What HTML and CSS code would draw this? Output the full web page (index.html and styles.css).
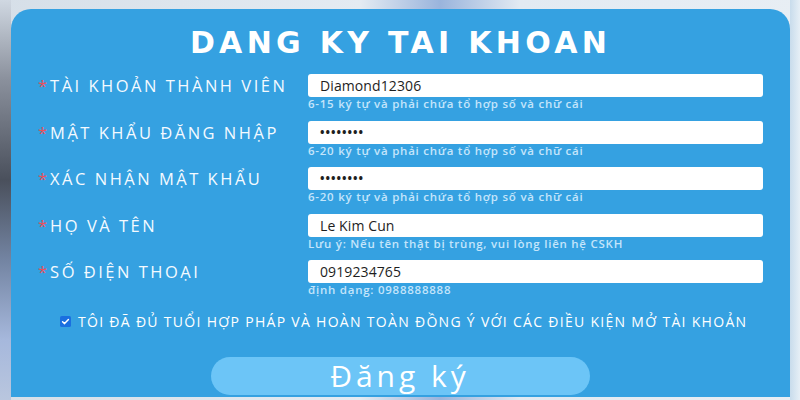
FILE: index.html
```html
<!DOCTYPE html>
<html lang="vi">
<head>
<meta charset="utf-8">
<title>Đăng ký tài khoản</title>
<link rel="stylesheet" href="styles.css">
</head>
<body>
<div class="frame">
  <div class="edge-left"></div>
  <main class="card">
    <h1 class="title">DANG KY TAI KHOAN</h1>
    <form class="form">
      <div class="row">
        <label class="label"><span class="req">*</span>TÀI KHOẢN THÀNH VIÊN</label>
        <div class="field">
          <div class="input">Diamond12306</div>
          <div class="hint">6-15 ký tự và phải chứa tổ hợp số và chữ cái</div>
        </div>
      </div>
      <div class="row">
        <label class="label"><span class="req">*</span>MẬT KHẨU ĐĂNG NHẬP</label>
        <div class="field">
          <div class="input pw">••••••••</div>
          <div class="hint">6-20 ký tự và phải chứa tổ hợp số và chữ cái</div>
        </div>
      </div>
      <div class="row">
        <label class="label"><span class="req">*</span>XÁC NHẬN MẬT KHẨU</label>
        <div class="field">
          <div class="input pw">••••••••</div>
          <div class="hint">6-20 ký tự và phải chứa tổ hợp số và chữ cái</div>
        </div>
      </div>
      <div class="row">
        <label class="label"><span class="req">*</span>HỌ VÀ TÊN</label>
        <div class="field">
          <div class="input">Le Kim Cun</div>
          <div class="hint">Lưu ý: Nếu tên thật bị trùng, vui lòng liên hệ CSKH</div>
        </div>
      </div>
      <div class="row">
        <label class="label"><span class="req">*</span>SỐ ĐIỆN THOẠI</label>
        <div class="field">
          <div class="input">0919234765</div>
          <div class="hint">định dạng: 0988888888</div>
        </div>
      </div>
      <div class="agree">
        <span class="check"><svg viewBox="0 0 12 12" width="11" height="11"><rect x="0" y="0" width="12" height="12" rx="2" fill="#1a6fe0"/><path d="M2.8 6.2 L5 8.3 L9.2 3.8" fill="none" stroke="#fff" stroke-width="1.6" stroke-linecap="round" stroke-linejoin="round"/></svg></span>
        <span class="agree-text">TÔI ĐÃ ĐỦ TUỔI HỢP PHÁP VÀ HOÀN TOÀN ĐỒNG Ý VỚI CÁC ĐIỀU KIỆN MỞ TÀI KHOẢN</span>
      </div>
      <div class="actions">
        <button type="button" class="submit">Đăng ký</button>
      </div>
    </form>
  </main>
  <div class="edge-right"></div>
</div>
</body>
</html>
```

FILE: styles.css
```css
* { box-sizing: border-box; }
html, body { margin: 0; padding: 0; }
body {
  width: 800px;
  height: 400px;
  overflow: hidden;
  font-family: "Open Sans", "Liberation Sans", sans-serif;
  background: linear-gradient(90deg, #d6dfe8 0%, #e4ebf2 45%, #9ab4dc 55%, #e2eaf2 65%, #e8eef4 100%);
}
.frame {
  display: flex;
  height: 400px;
  padding-top: 9px;
}
.edge-left {
  width: 11px;
  flex: none;
  margin-top: -9px;
  background: linear-gradient(180deg, #d0d8e2 0%, #8a909c 20%, #4a505c 45%, #7384a2 65%, #a6b8dc 85%, #b9c6de 100%);
}
.edge-right {
  width: 10px;
  flex: none;
  margin-top: -9px;
  background: linear-gradient(90deg, #c8dcec 0%, #e6eff6 100%);
}
.card {
  flex: 1;
  height: 388px;
  background: #35a1e1;
  border-radius: 20px 20px 0 0;
  padding: 0 27px;
  color: #fff;
}
.title {
  margin: 0;
  padding-top: 15px;
  height: 62px;
  text-align: center;
  font-family: "DejaVu Sans", sans-serif;
  font-weight: bold;
  font-size: 30px;
  letter-spacing: 4.3px;
  line-height: 38px;
  color: #fff;
}
.form {
  display: flex;
  flex-direction: column;
  padding-top: 3px;
}
.row {
  display: grid;
  grid-template-columns: 270px 455px;
  align-items: start;
  margin-bottom: 9.5px;
}
.label {
  height: 23px;
  line-height: 23px;
  font-size: 16.5px;
  letter-spacing: 2.5px;
  white-space: nowrap;
  color: #f4faff;
}
.req {
  color: #e8505a;
  margin-right: 3px;
  letter-spacing: 0;
}
.field {
  display: flex;
  flex-direction: column;
}
.input {
  height: 23px;
  line-height: 23px;
  background: #fff;
  border-radius: 3px;
  padding-left: 12px;
  font-size: 14px;
  letter-spacing: 0.1px;
  color: #1e1e1e;
}
.input.pw {
  font-size: 12px;
  letter-spacing: 1px;
  font-weight: bold;
}
.hint {
  height: 14px;
  line-height: 14px;
  font-size: 11.5px;
  font-weight: 600;
  letter-spacing: 0.75px;
  color: #c4e5fb;
  white-space: nowrap;
}
.agree {
  display: flex;
  align-items: center;
  gap: 7px;
  margin-top: 7px;
  padding-left: 22px;
  height: 16px;
}
.check { display: flex; }
.agree-text {
  font-size: 14px;
  letter-spacing: 1.3px;
  white-space: nowrap;
  color: #fff;
}
.actions {
  display: flex;
  justify-content: center;
  margin-top: 27px;
  padding-right: 1px;
}
.submit {
  width: 379px;
  height: 38px;
  border: none;
  border-radius: 19px;
  background: #6cc5f7;
  color: #fff;
  font-family: "Open Sans", sans-serif;
  font-size: 30px;
  letter-spacing: 4px;
  line-height: 36px;
  padding: 0;
}
```
